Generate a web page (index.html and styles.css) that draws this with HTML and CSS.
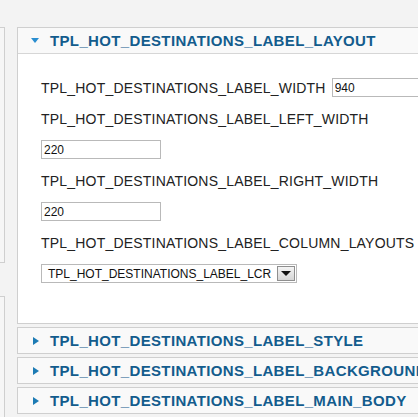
FILE: index.html
```html
<!DOCTYPE html>
<html>
<head>
    <meta charset="UTF-8">
    <title>Template Parameters</title>
    <link rel="stylesheet" href="styles.css">
</head>
<body>
    <div class="page">
        <div class="side">
            <div class="side-box first"></div>
            <div class="side-box second"></div>
        </div>

        <div class="panels">
            <div class="panel open">
                <h3 class="panel-title">
                    <span class="arrow down"></span>
                    TPL_HOT_DESTINATIONS_LABEL_LAYOUT
                </h3>
                <div class="panel-body">
                    <div class="row">
                        <label for="width">TPL_HOT_DESTINATIONS_LABEL_WIDTH</label>
                        <input id="width" class="wide" type="text" value="940">
                    </div>
                    <div class="row">
                        <label for="left-width">TPL_HOT_DESTINATIONS_LABEL_LEFT_WIDTH</label>
                    </div>
                    <div class="row">
                        <input id="left-width" type="text" value="220">
                    </div>
                    <div class="row">
                        <label for="right-width">TPL_HOT_DESTINATIONS_LABEL_RIGHT_WIDTH</label>
                    </div>
                    <div class="row">
                        <input id="right-width" type="text" value="220">
                    </div>
                    <div class="row">
                        <label for="layouts">TPL_HOT_DESTINATIONS_LABEL_COLUMN_LAYOUTS</label>
                    </div>
                    <div class="row">
                        <div class="select" id="layouts">
                            <span class="select-value">TPL_HOT_DESTINATIONS_LABEL_LCR</span>
                            <span class="select-button"><span class="caret"></span></span>
                        </div>
                    </div>
                </div>
            </div>

            <div class="panel">
                <h3 class="panel-title"><span class="arrow right"></span>TPL_HOT_DESTINATIONS_LABEL_STYLE</h3>
            </div>
            <div class="panel">
                <h3 class="panel-title"><span class="arrow right"></span>TPL_HOT_DESTINATIONS_LABEL_BACKGROUND</h3>
            </div>
            <div class="panel">
                <h3 class="panel-title"><span class="arrow right"></span>TPL_HOT_DESTINATIONS_LABEL_MAIN_BODY</h3>
            </div>
        </div>
    </div>
</body>
</html>
```

FILE: styles.css
```css
html {
    font-family: 'Liberation Sans', Arial, sans-serif;
}

body {
    margin: 0;
    background-color: #f3f3f3;
    color: #333;
    overflow: hidden;
}

.page {
    display: flex;
    gap: 12px;
    padding-top: 27px;
}

.side {
    display: flex;
    flex-direction: column;
    width: 5px;
    flex: 0 0 5px;
}

.side-box {
    border: 1px solid #cfcfcf;
    border-left: none;
    background-color: #f6f6f6;
}

.side-box.first {
    height: 234px;
}

.side-box.second {
    margin-top: 33px;
    height: 200px;
    border-bottom: none;
}

.panels {
    display: flex;
    flex-direction: column;
    gap: 3px;
    width: 430px;
    flex: 0 0 430px;
}

.panel {
    border: 1px solid #cfcfcf;
    background-color: #fff;
}

.panel-title {
    display: flex;
    align-items: center;
    height: 25px;
    margin: 0;
    padding-left: 14px;
    background-color: #f9f9f9;
    color: #135c8d;
    font-size: 15px;
    font-weight: bold;
    letter-spacing: 0.35px;
    white-space: nowrap;
}

.panel.open .panel-title {
    border-bottom: 1px solid #d6d6d6;
}

.arrow {
    display: inline-block;
    width: 0;
    height: 0;
    margin-right: 10px;
}

.arrow.down {
    border-left: 4px solid transparent;
    border-right: 4px solid transparent;
    border-top: 5px solid #2a8ed0;
    margin-left: -1px;
    margin-right: 11px;
}

.arrow.right {
    border-top: 4px solid transparent;
    border-bottom: 4px solid transparent;
    border-left: 6px solid #1d7bb4;
    margin-left: 1px;
    margin-right: 11px;
}

.panel-body {
    display: flex;
    flex-direction: column;
    padding: 18px 0 34px 23px;
}

.row {
    display: flex;
    align-items: center;
    height: 31px;
    font-size: 14px;
    letter-spacing: 0.2px;
    color: #222;
    white-space: nowrap;
}

.row label {
    margin-right: 6px;
}

input {
    box-sizing: border-box;
    width: 120px;
    height: 19px;
    padding: 1px 2px;
    border: 1px solid #b9b9b9;
    font-family: inherit;
    font-size: 12px;
    letter-spacing: 0;
    color: #111;
    outline: none;
}

input.wide {
    width: 120px;
}

.select {
    box-sizing: border-box;
    display: flex;
    align-items: center;
    justify-content: space-between;
    width: 256px;
    height: 19px;
    padding: 0 1px 0 6px;
    border: 1px solid #b9b9b9;
    background-color: #fff;
    font-size: 12px;
    letter-spacing: 0;
    color: #111;
}

.select-button {
    display: flex;
    align-items: center;
    justify-content: center;
    box-sizing: border-box;
    width: 18px;
    height: 15px;
    border: 1px solid #8f8f8f;
    background: linear-gradient(#f4f4f4, #d6d6d6);
}

.caret {
    width: 0;
    height: 0;
    border-left: 5px solid transparent;
    border-right: 5px solid transparent;
    border-top: 5px solid #111;
}
```
